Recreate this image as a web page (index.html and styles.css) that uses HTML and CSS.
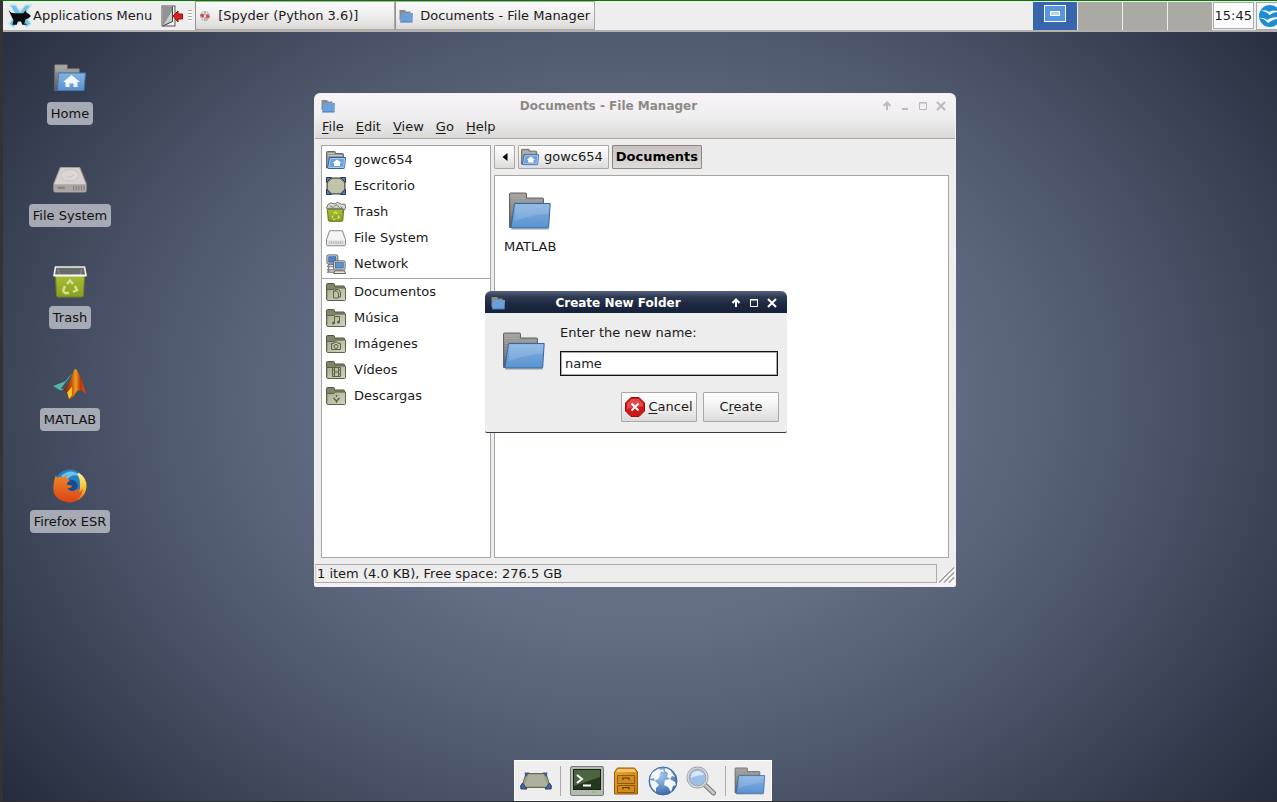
FILE: index.html
```html
<!DOCTYPE html>
<html lang="en">
<head>
<meta charset="utf-8">
<title>Desktop</title>
<link rel="stylesheet" href="styles.css">
</head>
<body>
<svg class="defs" aria-hidden="true">
  <defs>
    <linearGradient id="blue" x1="0" y1="0" x2="0" y2="1"><stop offset="0" stop-color="#86b2e0"/><stop offset="1" stop-color="#5a92d0"/></linearGradient>
    <linearGradient id="grey" x1="0" y1="0" x2="0" y2="1"><stop offset="0" stop-color="#a3a39f"/><stop offset="1" stop-color="#5c5d5a"/></linearGradient>
    <linearGradient id="olive" x1="0" y1="0" x2="1" y2="1"><stop offset="0" stop-color="#a9ad90"/><stop offset="1" stop-color="#d2d6bf"/></linearGradient>
    <linearGradient id="green" x1="0" y1="0" x2="0" y2="1"><stop offset="0" stop-color="#a9bf35"/><stop offset="1" stop-color="#8a9f22"/></linearGradient>
    <linearGradient id="flame" x1="0" y1="0" x2="1" y2="0"><stop offset="0" stop-color="#6b1c0c"/><stop offset=".35" stop-color="#c0500e"/><stop offset=".55" stop-color="#f39a1c"/><stop offset=".75" stop-color="#b33a0c"/><stop offset="1" stop-color="#e24f10"/></linearGradient>
    <linearGradient id="fox" x1="0" y1="0" x2="0" y2="1"><stop offset="0" stop-color="#f08a28"/><stop offset="1" stop-color="#dc4315"/></linearGradient>
    <linearGradient id="tail" x1="0" y1="0" x2="0" y2="1"><stop offset="0" stop-color="#fff09a"/><stop offset=".5" stop-color="#fbc02c"/><stop offset="1" stop-color="#e9631a"/></linearGradient>
    <radialGradient id="sphere" cx=".4" cy=".3" r=".8"><stop offset="0" stop-color="#a5c8ee"/><stop offset="1" stop-color="#2f5f9f"/></radialGradient>
    <linearGradient id="wood" x1="0" y1="0" x2="1" y2="1"><stop offset="0" stop-color="#eaa531"/><stop offset="1" stop-color="#c47c10"/></linearGradient>
  </defs>

  <symbol id="folder" viewBox="0 0 44 38">
    <path d="M3 36.500h38" stroke="#000" stroke-opacity=".18" stroke-width="3"/>
    <path d="M1.500 35.500V2q0-1 1-1h15q1 0 1 1v4h16q1 0 1 1v27z" fill="url(#grey)" stroke="#626360"/>
    <path d="M3 4h14M3 6.500h14M3 9h31M3 11.500h31M3 14h3M3 17h3M3 20h3M3 23h3" stroke="#b9b9b5" stroke-opacity=".55"/>
    <path d="M6.500 11.500h35.700l-1.500 23.500q0 1-1 1H4q-1 0-1-1z" fill="url(#blue)" stroke="#3568ab"/>
    <path d="M7.500 12.500h33.500l-.5 9Q22 23 6.700 29z" fill="#fff" fill-opacity=".14"/>
  </symbol>
  <symbol id="folder-mini" viewBox="0 0 14 14">
    <path d="M.5 11V1h6v1.500h5V11z" fill="#8a8b87"/><path d="M2 4h12l-.5 9H1.200z" fill="#6b9fd8"/><path d="M1.200 13h12.300" stroke="#4378b8"/>
  </symbol>
  <symbol id="home-folder" viewBox="0 0 32 28">
    <path d="M.5 26.500v-25q0-1 1-1h11q1 0 1 1v3h11q1 0 1 1v21z" fill="url(#grey)" stroke="#666764"/>
    <path d="M2 3h10M2 5h10M2 7h22" stroke="#bbb" stroke-opacity=".6"/>
    <path d="M4.500 9h27l-1.500 17.500H3.500z" fill="url(#blue)" stroke="#4077b9"/>
    <path d="M17.500 11l8.500 7h-2.500v5h-4v-3.500h-4v3.500h-4v-5H9z" fill="#f4f8fd"/>
  </symbol>
  <symbol id="home-small" viewBox="0 0 20 18">
    <path d="M.5 17V1.500q0-1 1-1h7q1 0 1 1v1h7q1 0 1 1V8z" fill="#999a96" stroke="#666764"/>
    <path d="M2 2.500h6M2 4.500h14" stroke="#c4c4c0"/>
    <path d="M3.500 6.500h16l-1 10q0 1-1 1h-15q-1 0-.9-1z" fill="#6fa1da" stroke="#2f62a5"/>
    <path d="M4.500 7.500h14l-.8 9H2.800z" fill="none" stroke="#a8c9ee"/>
    <path d="M11 8.500l4.500 3.500H14v3H8v-3H6.500z" fill="#fff"/>
  </symbol>
  <symbol id="drive" viewBox="0 0 32 25">
    <path d="M6.500 1q.4-.6 1-.6h17q.7 0 1 .6l6 15v6.500q0 1.500-1.500 1.500H2Q.5 24 .5 22.500V16z" fill="#d6d2cf" stroke="#a39f9c"/>
    <path d="M.7 16.500h30.600v6q0 1.300-1.300 1.300H2q-1.300 0-1.300-1.300z" fill="#aaa5a2"/>
    <ellipse cx="16" cy="8" rx="8.500" ry="5.500" fill="#dbd7d4" stroke="#cac6c3"/>
    <path d="M12 9q4 3 8-2" fill="none" stroke="#c8c4c1"/>
    <path d="M4 19h7v2H4z" fill="#85817e"/><path d="M19.500 18v4.500m2.500-4.500v4.500m2.500-4.500v4.500m2.500-4.500v4.500m2.500-4.500v4.500" stroke="#817d7a"/>
  </symbol>
  <symbol id="drive-small" viewBox="0 0 22 18">
    <path d="M4 1h14l3.500 10v5q0 1.500-1.500 1.500H2Q.5 17.500.5 16v-5z" fill="#f4f4f3" stroke="#7c7e7a"/>
    <path d="M1.500 11.500h19v5h-19z" fill="#e0e0de"/><path d="M4 13v2m2-2v2m2-2v2m2-2v2m2-2v2m2-2v2m2-2v2m2-2v2" stroke="#a3a5a0"/>
  </symbol>
  <symbol id="bin" viewBox="0 0 34 32">
    <path d="M2.500 9h29l-1 20.500Q30.400 31 29 31H5q-1.400 0-1.500-1.500z" fill="url(#green)" stroke="#71871a"/>
    <path d="M2.500 1h29l1.500 8.500H1z" fill="#676c68" stroke="#efefec" stroke-width="1.600"/>
    <path d="M5 3l2 6M29 3l-2 6" stroke="#8f9491"/>
    <path d="M1 9.500h32" stroke="#f7f7f5" stroke-width="1.800"/>
    <path d="M14 18l3-3.500 3 3.500M22 20l2 4-4 2M10 25l2-5M16 27h-4l-2-2" fill="none" stroke="#d3df9a" stroke-width="2.400"/>
  </symbol>
  <symbol id="bin-full" viewBox="0 0 22 22">
    <path d="M1.500 8h18l-1 12q-.2 1.300-1.500 1.300H4q-1.300 0-1.500-1.300z" fill="url(#green)" stroke="#5f7410"/>
    <path d="M.5 7L2 3l3-2 4 1 4-1.500 4 2 4 0 .5 4-2 3-1-2.500z" fill="#d8dad4" stroke="#686b62"/>
    <path d="M4 4l4 2 3-3 4 3M16 5l3 3-1 4" fill="none" stroke="#70746a"/>
    <path d="M8.500 13l2-2 2 2m1 2l1 2-2 1.500m-6-1l1-2.500m3 4h-3" fill="none" stroke="#d9ea92" stroke-width="1.300"/>
  </symbol>
  <symbol id="desktop-small" viewBox="0 0 20 18">
    <rect x="1" y="1" width="18" height="16" fill="#8d9078" stroke="#44473c"/>
    <path d="M2 6l4-4h8l4 4v6l-4 4H6l-4-4z" fill="#c1c4a8"/>
    <path d="M.5.500h5l-5 5zM19.500.500v5l-5-5zM.5 17.500v-5l5 5zM19.500 17.500h-5l5-5z" fill="#5d7db0" stroke="#263c63"/>
  </symbol>
  <symbol id="desktop-wide" viewBox="0 0 32 18">
    <path d="M6 1.500h20l4.500 14H1.500z" fill="#9b9f88" stroke="#676a58"/>
    <path d="M8 3h16l3.500 11h-23z" fill="#adb09b"/>
    <path d="M4.500.500h5l-4 5zM27.500.500h-5l4 5z" fill="#3d5c94"/>
    <path d="M1 17q-1.500-3 1.500-6l4.500 6zM31 17q1.500-3-1.500-6L25 17z" fill="#46669e" stroke="#263f70"/>
  </symbol>
  <symbol id="network" viewBox="0 0 22 22">
    <rect x="1" y="1" width="12" height="10" rx="1.500" fill="#e2e3e0" stroke="#51534e"/><rect x="3" y="3" width="8" height="6" fill="#4f82c4" stroke="#2d568d" stroke-width=".7"/>
    <path d="M3 11.500h6v2.500H2zM3 14v6M1 17.500h8M1 20h8" fill="#ddd" stroke="#777" stroke-width="1.300"/>
    <rect x="8.500" y="7.500" width="12.500" height="10" rx="1.500" fill="#e8e9e6" stroke="#51534e"/><rect x="10.500" y="9.500" width="8.500" height="6" fill="#5d92d2" stroke="#2d568d" stroke-width=".7"/>
    <path d="M9.500 18.500h11l1 3h-13z" fill="#e5e5e2" stroke="#51534e"/>
  </symbol>
  <symbol id="place" viewBox="0 0 20 18">
    <path d="M.5 16V1.500q0-1 1-1h6q1 0 1 1V3h9q1 0 1 1v12z" fill="#818569" stroke="#54573f"/>
    <path d="M.8 6.500h7l2-1.500h9.700v11.500q0 1-1 1h-16.700q-1 0-1-1z" fill="url(#olive)" stroke="#5e614a"/>
  </symbol>
  <symbol id="xfce" viewBox="0 0 22 22">
    <path d="M2 1l5 0 4 6 5-6h5l-6 9 6 8-4 3-6-6-6 6-4-3 6-8z" fill="#72c2e4" stroke="#b5e1f2"/>
    <path d="M.5 5.500L3 8l3 .5h8l2-2.500 1 2 2 1 2 2-2 2-3 1-1 4h2v1h-4l-1-3H9l-1 3H4l1-4-2-4z" fill="#0a0c0e"/>
  </symbol>
  <symbol id="logout" viewBox="0 0 22 22">
    <rect x="1" y="1" width="13" height="20" fill="#f0f0f0" stroke="#555"/><path d="M1.500 1.500h10v15L2 21z" fill="#8f9391"/><path d="M2 20.500L11 6v10z" fill="#c9cccb"/><path d="M11.500 1.500v15L2 21" fill="none" stroke="#444"/>
    <path d="M12 11l5-5v3h4.500v5H17v3z" fill="#d9201e" stroke="#8c0d0d"/>
  </symbol>
  <symbol id="spyder" viewBox="0 0 14 14">
    <circle cx="7" cy="7" r="6" fill="#b9b5b5"/><path d="M2 3l3 2V1m4 0v4l3-2m1 4L9 8l3 4M5 13V9L1 10" fill="none" stroke="#fff" stroke-width=".8"/>
    <path d="M1 6l3-2 3 2 3-1 3 3-3 2-3-2-3 1z" fill="#d84a4d"/><circle cx="7" cy="7" r="1.500" fill="#eed"/>
  </symbol>
  <symbol id="birds" viewBox="0 0 26 26">
    <circle cx="13" cy="13" r="11" fill="#1c8cd3"/>
    <path d="M4 8q5-2 8 1 4-3 11 0-6-.5-10.500 3Q9 8 4 8zM1 15q6-1 9 2 6-4 14-2-8 1-13 5-4-5-10-5z" fill="#fff"/>
  </symbol>
  <symbol id="matlab" viewBox="0 0 36 34">
    <path d="M0 19l13-5 4-5 4-4-8 17-5 2z" fill="#57b3ae"/><path d="M8 22l7-9 7-9-8 18z" fill="#3a5560"/>
    <path d="M11 23Q17 18 22 3q1-3 3-1 5 7 10 26-6-7-10-3-4 7-8 9-1-9-6-11z" fill="url(#flame)"/><path d="M15 26l5-6 0 9-3 4z" fill="#ffdf24" fill-opacity=".85"/>
  </symbol>
  <symbol id="firefox" viewBox="0 0 34 34">
    <circle cx="17" cy="16" r="15.500" fill="#2780c5"/><path d="M8 7Q18-2 27 7q-9-3-14 5z" fill="#6bc3ea"/><path d="M14 12q8-4 11 5-3 8-10 5z" fill="#174c91"/>
    <path d="M26 4q8 5 7.500 14Q32 31 18 33q8-5 9-14 .500-10-3-14z" fill="url(#tail)"/>
    <path d="M3 6l1 3q3-2 7-1l3-3q-1 4 0 5l3 1-3 3q-1 2 1 2 4 0 4 1-1 3-5 2 3 5 9 2 4-2 4-1-2 3-3 4 4-1 6-5-2 14-14 14.500Q-1 31 .5 17 1 10 3 6z" fill="url(#fox)"/>
  </symbol>
  <symbol id="terminal" viewBox="0 0 34 30">
    <path d="M2 .5h30q1.500 0 1.500 1.500v26q0 1.500-1.500 1.500H2Q.5 29.500.5 28V2Q.5.500 2 .5z" fill="#b5b8b3" stroke="#777a76"/>
    <rect x="3.500" y="3.500" width="27" height="20" fill="#24371f" stroke="#172312"/><path d="M4 4h26v7L4 20z" fill="#4a6540"/>
    <path d="M7 9l5 4-5 4M13 19.500h8" fill="none" stroke="#fff" stroke-width="2"/><path d="M22 26h3" stroke="#70d23a" stroke-width="1.500"/>
  </symbol>
  <symbol id="cabinet" viewBox="0 0 24 28">
    <path d="M3.500 1h17l3 4v22h-23V5z" fill="url(#wood)" stroke="#9a5d06"/><path d="M4 2h16l2 3H2z" fill="#f4c269"/>
    <path d="M3.500 8.500h17v8h-17zM3.500 18.500h17v7h-17z" fill="#d38c1b" stroke="#8e590c"/><path d="M9 13v-2h6v2M9 22.500v-2h6v2" fill="none" stroke="#5e3c0a" stroke-width="1.200"/>
  </symbol>
  <symbol id="globe" viewBox="0 0 30 30">
    <circle cx="15" cy="15" r="14" fill="url(#sphere)" stroke="#436c9f"/>
    <path d="M4 7l6-4 4 1-2 4-1 4-4 3-1-3-4 1zM2 14l5 1 4 4-3 3v4q-6-5-6-12zM17 2l5 2 5 7-3-1-2 3-3-2 1-4-3-2zM17 14l5-1 5 3 1 3-3 1-2 6-3-5-4-2zM12 5l3-2 1 3z" fill="#f3f6fa"/>
  </symbol>
  <symbol id="search" viewBox="0 0 30 30">
    <path d="M18.500 18.500l9 8.500" stroke="#777" stroke-width="5" stroke-linecap="round"/><path d="M18.500 18.500l9 8.500" stroke="#c7c7c5" stroke-width="3" stroke-linecap="round"/>
    <circle cx="11.500" cy="11.500" r="9.500" fill="#9dc0ea" stroke="#a4a5a3" stroke-width="3"/><circle cx="11.500" cy="11.500" r="9.500" fill="none" stroke="#ddd" stroke-width="1.200"/>
    <path d="M5 12q0-7 7-7 5 1 6 4-8 0-13 3z" fill="#d8e8fa"/>
  </symbol>
  <symbol id="cancel" viewBox="0 0 20 20">
    <path d="M6 .5h8L19.500 6v8L14 19.500H6L.5 14V6z" fill="#cf1718" stroke="#9b0b0b"/><path d="M6.500 2h7l4.500 4.500v3Q10 9 2 12V6.500z" fill="#ee6c6b" fill-opacity=".6"/><path d="M6.500 6.500l7 7m0-7l-7 7" stroke="#fff" stroke-width="2"/>
  </symbol>
  <symbol id="wm-up" viewBox="0 0 10 10"><path d="M5 9V2M1.500 5L5 1.500 8.500 5" fill="none" stroke="currentColor" stroke-width="2"/></symbol>
  <symbol id="wm-min" viewBox="0 0 10 10"><path d="M2 8h6" stroke="currentColor" stroke-width="2"/></symbol>
  <symbol id="wm-max" viewBox="0 0 10 10"><path d="M1.500 1.500h7v7h-7zM1 2h8" fill="none" stroke="currentColor"/></symbol>
  <symbol id="wm-close" viewBox="0 0 10 10"><path d="M1 1l8 8m0-8L1 9" stroke="currentColor" stroke-width="2"/></symbol>
</svg>

<header class="panel">
  <button class="app-menu"><svg class="i24"><use href="#xfce"/></svg>Applications Menu</button>
  <button class="logout" aria-label="Log out"><svg class="i22"><use href="#logout"/></svg></button>
  <span class="grip"></span>
  <button class="task"><svg class="i12"><use href="#spyder"/></svg>[Spyder (Python 3.6)]</button>
  <button class="task"><svg class="i14"><use href="#folder-mini"/></svg>Documents - File Manager</button>
  <nav class="pager" aria-label="Workspaces">
    <button class="ws active" aria-label="Workspace 1"><span class="mini"><span class="mini-in"></span></span></button>
    <button class="ws" aria-label="Workspace 2"></button>
    <button class="ws" aria-label="Workspace 3"></button>
    <button class="ws" aria-label="Workspace 4"></button>
  </nav>
  <time class="clock">15:45</time>
  <button class="tray" aria-label="Office"><svg class="i26"><use href="#birds"/></svg></button>
</header>

<main class="desktop">
  <nav class="shortcuts">
    <a class="shortcut" href="#"><span class="pic"><svg class="home"><use href="#home-folder"/></svg></span><span class="caption">Home</span></a>
    <a class="shortcut" href="#"><span class="pic"><svg class="disk"><use href="#drive"/></svg></span><span class="caption">File System</span></a>
    <a class="shortcut" href="#"><span class="pic"><svg class="i34"><use href="#bin"/></svg></span><span class="caption">Trash</span></a>
    <a class="shortcut" href="#"><span class="pic"><svg class="i34"><use href="#matlab"/></svg></span><span class="caption">MATLAB</span></a>
    <a class="shortcut" href="#"><span class="pic"><svg class="i34"><use href="#firefox"/></svg></span><span class="caption">Firefox ESR</span></a>
  </nav>

  <section class="window">
    <header class="titlebar">
      <svg class="i14"><use href="#folder-mini"/></svg><h1 class="title">Documents - File Manager</h1>
      <span class="controls">
        <button class="wm" aria-label="Shade"><svg><use href="#wm-up"/></svg></button>
        <button class="wm" aria-label="Minimize"><svg><use href="#wm-min"/></svg></button>
        <button class="wm" aria-label="Maximize"><svg><use href="#wm-max"/></svg></button>
        <button class="wm" aria-label="Close"><svg><use href="#wm-close"/></svg></button>
      </span>
    </header>
    <nav class="menubar"><button><u>F</u>ile</button><button><u>E</u>dit</button><button><u>V</u>iew</button><button><u>G</u>o</button><button><u>H</u>elp</button></nav>
    <div class="body">
      <nav class="places">
        <a href="#"><svg><use href="#home-small"/></svg>gowc654</a>
        <a href="#"><svg><use href="#desktop-small"/></svg>Escritorio</a>
        <a href="#"><svg><use href="#bin-full"/></svg>Trash</a>
        <a href="#"><svg><use href="#drive-small"/></svg>File System</a>
        <a href="#"><svg><use href="#network"/></svg>Network</a>
        <hr>
        <a href="#"><svg viewBox="0 0 20 20"><use href="#place" width="20" height="20"/><path d="M7.500 9h3l2 2v5h-5zM9.500 9V7.500h3L14.500 10v5h-2" fill="none" stroke="#5e614a"/></svg>Documentos</a>
        <a href="#"><svg viewBox="0 0 20 20"><use href="#place" width="20" height="20"/><path d="M8.500 15V8.500h5V14" fill="none" stroke="#5e614a"/><circle cx="7.500" cy="15" r="1.500" fill="#5e614a"/><circle cx="12.500" cy="14" r="1.500" fill="#5e614a"/></svg>Música</a>
        <a href="#"><svg viewBox="0 0 20 20"><use href="#place" width="20" height="20"/><path d="M5.500 9.500h2l1-1.500h3l1 1.500h2v6h-9z" fill="none" stroke="#5e614a"/><circle cx="10" cy="12.500" r="2" fill="none" stroke="#5e614a"/></svg>Imágenes</a>
        <a href="#"><svg viewBox="0 0 20 20"><use href="#place" width="20" height="20"/><path d="M6.500 7.500h8v9h-8zM8.500 7v10M12.500 7v10M8 12h5M6 10h2m5 0h2m-9 4h2m5 0h2" fill="none" stroke="#5e614a"/></svg>Vídeos</a>
        <a href="#"><svg viewBox="0 0 20 20"><use href="#place" width="20" height="20"/><path d="M10.500 9v2M7.500 12l3 3 3-3M10 15l.5 1 .5-1" fill="none" stroke="#5e614a" stroke-width="1.400"/></svg>Descargas</a>
      </nav>
      <div class="main">
        <nav class="pathbar">
          <button class="crumb back" aria-label="Back"><svg viewBox="0 0 6 8"><path d="M5.500 0v8L.5 4z"/></svg></button>
          <button class="crumb"><svg class="i18"><use href="#home-small"/></svg>gowc654</button>
          <button class="crumb current">Documents</button>
        </nav>
        <div class="files"><a class="file" href="#"><svg class="big"><use href="#folder"/></svg>MATLAB</a></div>
      </div>
    </div>
    <footer class="status"><span class="status-text">1 item (4.0 KB), Free space: 276.5 GB</span><svg class="resize" viewBox="0 0 16 16"><path d="M0 16L15 1M6 16l9-9M12 16l3-3" stroke="#fff" stroke-width="4"/><path d="M0 15.500L15 .5M5 15.500L15 5.500M10 15.500l5-5" stroke="#999994" stroke-width="1.400"/></svg></footer>
  </section>

  <form class="dialog" role="dialog" aria-labelledby="dialog-title">
    <header class="dialog-bar">
      <svg class="i14"><use href="#folder-mini"/></svg><h2 class="title" id="dialog-title">Create New Folder</h2>
      <span class="controls">
        <button type="button" class="wm" aria-label="Shade"><svg><use href="#wm-up"/></svg></button>
        <button type="button" class="wm" aria-label="Maximize"><svg><use href="#wm-max"/></svg></button>
        <button type="button" class="wm" aria-label="Close"><svg><use href="#wm-close"/></svg></button>
      </span>
    </header>
    <div class="dialog-body">
      <svg class="big"><use href="#folder"/></svg>
      <div class="field"><label for="name">Enter the new name:</label><input id="name" type="text" value="name"></div>
    </div>
    <div class="actions">
      <button type="button" class="btn"><svg class="i20"><use href="#cancel"/></svg><span><u>C</u>ancel</span></button>
      <button type="button" class="btn"><span>C<u>r</u>eate</span></button>
    </div>
  </form>

  <nav class="dock" aria-label="Launcher">
    <button aria-label="Show desktop"><svg class="i32"><use href="#desktop-wide"/></svg></button>
    <span class="sep"></span>
    <button aria-label="Terminal"><svg class="i34"><use href="#terminal"/></svg></button>
    <button aria-label="File manager"><svg class="i28"><use href="#cabinet"/></svg></button>
    <button aria-label="Web browser"><svg class="i30"><use href="#globe"/></svg></button>
    <button aria-label="Find"><svg class="i30"><use href="#search"/></svg></button>
    <span class="sep"></span>
    <button aria-label="Directory"><svg class="i32"><use href="#folder"/></svg></button>
  </nav>
</main>
</body>
</html>
```
FILE: styles.css
```css
* { box-sizing: border-box; }
body {
  margin: 0;
  height: 100vh;
  display: flex;
  flex-direction: column;
  overflow: hidden;
  border-top: 1px solid #067806;
  border-left: 3px solid #333;
  border-bottom: 1px solid #2b2c30;
  background: radial-gradient(ellipse 60% 75% at 50% 50%, #6b788c 0%, #626e84 38%, #505a6f 62%, #3f475b 80%, #232a3b 108%);
  font: 13px/16px "DejaVu Sans", sans-serif;
  color: #1a1a1a;
}
button { font: inherit; color: inherit; margin: 0; padding: 0; border: 0; background: none; }
a { color: inherit; text-decoration: none; }
svg { display: block; flex: none; }
u { text-underline-offset: 2px; }
.defs { position: absolute; width: 0; height: 0; }
.i12 { width: 12px; height: 12px; }
.i14 { width: 14px; height: 14px; }
.i18 { width: 18px; height: 18px; }
.i20 { width: 20px; height: 20px; }
.i22 { width: 22px; height: 22px; }
.i24 { width: 24px; height: 24px; }
.i26 { width: 26px; height: 26px; }
.i28 { width: 28px; height: 28px; }
.i30 { width: 30px; height: 30px; }
.i32 { width: 32px; height: 32px; }
.i34 { width: 34px; height: 34px; }
.big { width: 44px; height: 40px; }

.panel {
  display: flex;
  align-items: center;
  height: 31px;
  flex: none;
  background: #eee;
  border-bottom: 2px solid #b2b1ae;
}
.app-menu { display: flex; align-items: center; gap: 1px; padding-left: 5px; }
.logout { margin-left: 9px; }
.grip {
  width: 4px;
  height: 12px;
  margin: 0 3px 0 5px;
  background: repeating-linear-gradient(#aaa 0 1px, #f8f8f8 1px 3px);
}
.task {
  display: flex;
  align-items: center;
  gap: 7px;
  width: 200px;
  height: 29px;
  padding: 0 3px;
  border: 1px solid #aaa8a5;
  border-left-color: #949290;
  background: linear-gradient(#fafafa, #eee 50%, #dcdad8);
  white-space: nowrap;
}
.pager { display: flex; gap: 1px; height: 28px; margin-left: auto; background: #eee; }
.ws { width: 44px; background: #aaa9a4; }
.ws.active { display: flex; justify-content: center; background: #3766ae; }
.mini {
  display: flex;
  align-items: center;
  justify-content: center;
  width: 22px;
  height: 17px;
  margin-top: 3px;
  border: 1px solid #fff;
  background: #5496e3;
}
.mini-in { width: 10px; height: 5px; border: 1px solid #fff; background: #b6d1f3; }
.clock {
  height: 27px;
  margin: 0 2px 0 1px;
  padding: 5px 1px;
  border: 1px solid #aaa;
  background: #fbfbfb;
}
.tray { width: 21px; height: 28px; overflow: hidden; border: 1px solid #aaa; border-right: 0; background: #f4f4f4; }

.desktop { position: relative; flex: 1; display: flex; flex-direction: column; }
.shortcuts { display: flex; flex-direction: column; gap: 31px; width: 134px; padding-top: 22px; }
.shortcut { display: flex; flex-direction: column; align-items: center; }
.pic { display: flex; align-items: center; height: 48px; }
.home { width: 32px; height: 28px; }
.disk { width: 34px; height: 26px; }
.caption { padding: 4px 4px 3px; border-radius: 4px; background: #a6aab4; color: #111; }

.window {
  position: absolute;
  left: 311px;
  top: 61px;
  width: 642px;
  height: 494px;
  display: flex;
  flex-direction: column;
  border: solid #f5f0f4;
  border-width: 1px 1px 4px;
  border-radius: 6px 6px 2px 2px;
  background: #ededed;
}
.titlebar, .dialog-bar { display: flex; align-items: center; flex: none; }
.titlebar { height: 23px; padding: 0 9px 0 6px; background: linear-gradient(#f8f3f8, #efeef0); color: #8c8a86; border-radius: 6px 6px 0 0; }
.title { flex: 1; margin: 0; text-align: center; font: bold 12px/16px "DejaVu Sans", sans-serif; }
.controls { display: flex; gap: 8px; }
.wm svg { width: 10px; height: 10px; }
.titlebar .controls { color: #bcbab9; }
.menubar {
  display: flex;
  gap: 12px;
  height: 22px;
  padding: 0 7px;
  flex: none;
  border-bottom: 1px solid #aaa8a5;
  background: linear-gradient(#efefef, #dad8d7);
}
.menubar button { height: 19px; }
.body { display: flex; flex: 1; gap: 3px; min-height: 0; padding: 6px; }
.places { width: 170px; flex: none; border: 1px solid #a5a5a1; background: #fff; padding: 1px 0; }
.places a { display: flex; align-items: center; gap: 8px; height: 26px; padding-left: 4px; }
.places svg { width: 20px; height: 20px; }
.places hr { margin: 1px 0 0; border: 0; border-top: 1px solid #a5a5a1; }
.main { flex: 1; display: flex; flex-direction: column; gap: 6px; }
.pathbar { display: flex; gap: 3px; height: 24px; }
.crumb {
  display: flex;
  align-items: center;
  gap: 5px;
  padding: 0 5px 0 2px;
  border: 1px solid #aaa8a5;
  border-radius: 1px;
  background: linear-gradient(#fff, #f1f0f0 50%, #dddbda);
}
.crumb.back { width: 21px; justify-content: center; padding: 0; }
.back svg { width: 6px; height: 8px; }
.crumb.current { padding: 0 3px; background: linear-gradient(#c8c3c1, #dedbd9); border-color: #8c8682; font-weight: bold; color: #000; }
.files { flex: 1; padding: 15px 9px; border: 1px solid #a5a5a1; background: #fff; }
.file { display: inline-flex; flex-direction: column; align-items: center; gap: 8px; }
.status { display: flex; align-items: end; gap: 2px; height: 19px; flex: none; }
.status-text { flex: 1; height: 19px; padding: 1px 1px 0; border: 1px solid #aaa; border-left-color: #ccc; }
.resize { width: 16px; height: 16px; }

.dialog {
  position: absolute;
  left: 482px;
  top: 259px;
  width: 302px;
  height: 142px;
  border-bottom: 1px solid #30394f;
  border-radius: 6px 6px 2px 2px;
  background: #ededed;
}
.dialog-bar {
  height: 22px;
  padding: 2px 10px 0 6px;
  border-radius: 6px 6px 0 0;
  background: linear-gradient(#56617a 0, #303c54 25%, #1d2940 60%, #16213a);
  color: #fff;
}
.dialog-body { display: flex; align-items: center; gap: 14px; padding: 12px 9px 0 17px; }
.field { flex: 1; display: flex; flex-direction: column; gap: 10px; }
.field input {
  width: 100%;
  height: 25px;
  padding: 0 4px;
  border: 1px solid #111;
  outline: 0;
  background: #fff;
  box-shadow: inset 0 0 0 1px #aaa;
  font: inherit;
  color: inherit;
}
.actions { display: flex; justify-content: flex-end; gap: 6px; padding: 16px 8px 0; }
.btn {
  display: flex;
  align-items: center;
  justify-content: center;
  gap: 3px;
  width: 76px;
  height: 30px;
  border: 1px solid #aaa8a5;
  border-radius: 1px;
  background: linear-gradient(#fff, #f2f1f1 50%, #dcdad9);
}

.dock {
  display: flex;
  align-items: center;
  justify-content: space-between;
  align-self: center;
  width: 258px;
  height: 41px;
  margin: auto 0 0 6px;
  padding: 0 5px;
  border: 1px solid #fbfbfb;
  background: #eee;
}
.sep { width: 1px; height: 30px; background: #aaa; }
```
